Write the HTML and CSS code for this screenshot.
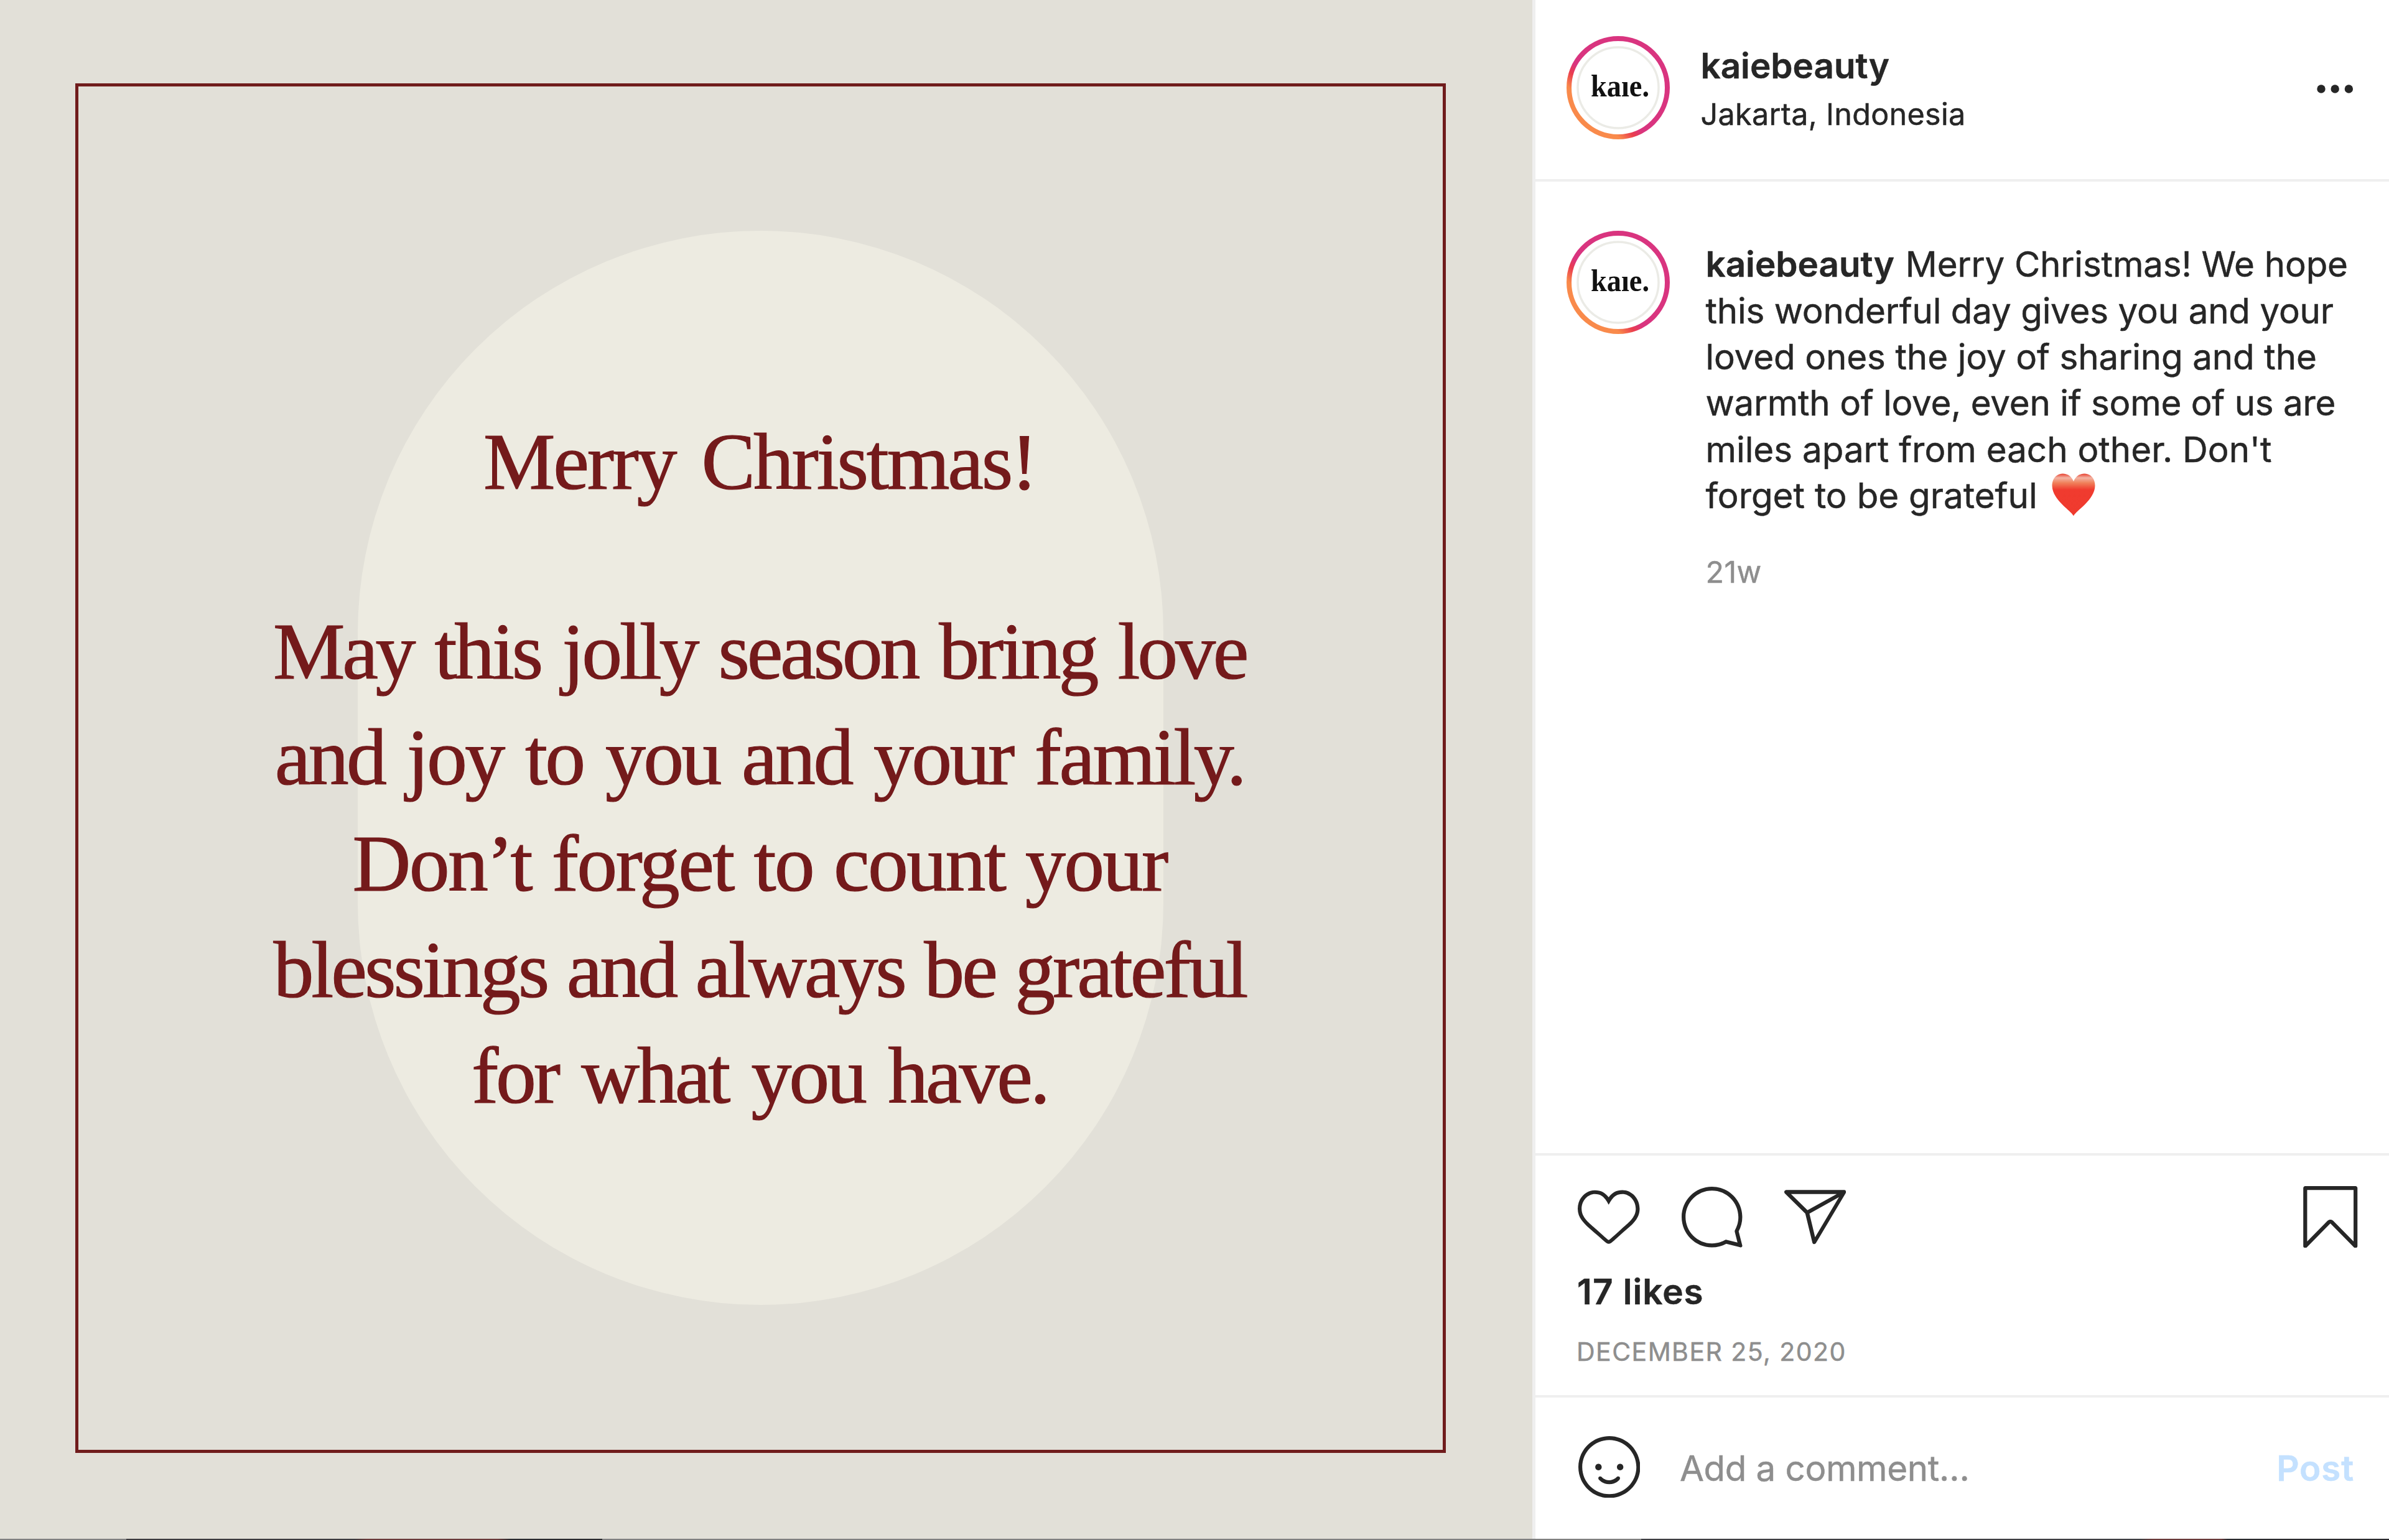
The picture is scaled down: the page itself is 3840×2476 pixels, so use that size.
FILE: index.html
```html
<!DOCTYPE html>
<html lang="en">
<head>
<meta charset="utf-8">
<title>kaiebeauty – Merry Christmas!</title>
<link rel="stylesheet" href="styles.css">
</head>
<body>
<svg class="defs" aria-hidden="true">
  <defs>
    <linearGradient id="ring" x1="0" y1="1" x2="1" y2="0">
      <stop offset=".25" stop-color="#f98a4b"/>
      <stop offset=".335" stop-color="#ea3d4e"/>
      <stop offset=".4" stop-color="#d9347f"/>
    </linearGradient>
    <linearGradient id="shine" x1="0" y1="0" x2="0" y2="1">
      <stop offset="0" stop-color="#e8402f"/>
      <stop offset=".1" stop-color="#f3b3a3"/>
      <stop offset=".22" stop-color="#f0805a"/>
      <stop offset=".38" stop-color="#f03b2f"/>
      <stop offset="1" stop-color="#ef3a2e"/>
    </linearGradient>
    <symbol id="avatar" viewBox="0 0 166 166">
      <circle cx="83" cy="83" r="79" fill="#fff" stroke="url(#ring)" stroke-width="8"/>
      <circle cx="83" cy="83" r="65" fill="#fff" stroke="#ebebe6" stroke-width="3.5"/>
      <text class="logo-text" x="39" y="96.5" textLength="94" lengthAdjust="spacingAndGlyphs">kaıe.</text>
    </symbol>
  </defs>
</svg>

<main class="post">
  <section class="photo">
    <div class="frame">
      <div class="pill"></div>
      <div class="greeting">
        <h1 class="line greeting-title">Merry Christmas!</h1>
        <p class="verse">
          <span class="line v1">May this jolly season bring love</span>
          <span class="line v2">and joy to you and your family.</span>
          <span class="line v3">Don’t forget to count your</span>
          <span class="line v4">blessings and always be grateful</span>
          <span class="line v5">for what you have.</span>
        </p>
      </div>
    </div>
  </section>

  <article class="panel">
    <header class="head">
      <svg class="avatar"><use href="#avatar"/></svg>
      <div class="who">
        <div class="name">kaiebeauty</div>
        <div class="place">Jakarta, Indonesia</div>
      </div>
      <svg class="more" viewBox="0 0 60 14"><circle cx="7" cy="7" r="6.7"/><circle cx="29.2" cy="7" r="6.7"/><circle cx="51.4" cy="7" r="6.7"/></svg>
    </header>

    <div class="body">
      <svg class="avatar"><use href="#avatar"/></svg>
      <div class="caption">
        <p class="text">
          <span class="row"><b>kaiebeauty</b> <span class="c1">Merry Christmas! We hope</span></span>
          <span class="row c2">this wonderful day gives you and your</span>
          <span class="row c3">loved ones the joy of sharing and the</span>
          <span class="row c4">warmth of love, even if some of us are</span>
          <span class="row">miles apart from each other. Don't</span>
          <span class="row">forget to be grateful <svg class="emoji" viewBox="0 0 70 69"><path fill="url(#shine)" d="M35 68.500C31 60 1 43 .5 20C.5 8 8 .5 17.500.5C26 .5 32 5.500 35 13C38 5.500 44 .5 52.500.5C62 .5 69.500 8 69.500 20C69 43 39 60 35 68.500z"/></svg></span>
        </p>
        <div class="age">21w</div>
      </div>
    </div>

    <div class="actions">
      <div class="icons">
        <svg class="icon" viewBox="0 0 48 48"><path d="M34.6 6.100c5.700 0 10.400 5.200 10.400 11.500 0 6.800-5.900 11-11.500 16S25 41.300 24 41.900c-1.100-.7-4.700-4-9.500-8.300-5.700-5-11.500-9.200-11.500-16C3 11.300 7.700 6.100 13.400 6.100c4.200 0 6.500 2 8.100 4.300 1.900 2.600 2.200 3.900 2.500 3.900.3 0 .6-1.300 2.500-3.900 1.600-2.300 3.900-4.300 8.100-4.300m0-3c-4.500 0-7.900 1.800-10.600 5.600-2.700-3.700-6.100-5.500-10.600-5.500C6 3.100 0 9.600 0 17.600c0 7.300 5.400 12 10.600 16.500.6.5 1.300 1.100 1.900 1.700l2.300 2c4.400 3.900 6.600 5.900 7.600 6.500.5.3 1.100.5 1.600.5.6 0 1.100-.2 1.600-.5 1-.6 2.800-2.200 7.800-6.800l2-1.800c.7-.6 1.300-1.200 2-1.700C42.700 29.600 48 25 48 17.600c0-8-6-14.500-13.400-14.500z"/></svg>
        <svg class="icon" viewBox="0 0 48 48"><path fill-rule="evenodd" d="M47.500 46.100l-2.800-11c1.800-3.300 2.800-7.100 2.800-11.100C47.500 11 37 .5 24 .5S.5 11 .5 24 11 47.500 24 47.500c4 0 7.800-1 11.100-2.800l11 2.800c.8.2 1.600-.6 1.400-1.400zm-3-22.100c0 4-1 7-2.600 10-.2.4-.3.9-.2 1.400l2.100 8.400-8.300-2.100c-.5-.1-1-.1-1.400.2-1.800 1-5.200 2.600-10 2.600-11.400 0-20.600-9.200-20.600-20.500S12.700 3.500 24 3.500 44.500 12.700 44.500 24z"/></svg>
        <svg class="icon" viewBox="0 0 48 48"><path d="M47.800 3.800c-.3-.5-.8-.8-1.300-.8h-45C.9 3.100.3 3.500.1 4S0 5.200.4 5.700l15.900 15.600 5.500 22.600c.1.6.6 1 1.200 1.100h.2c.5 0 1-.3 1.300-.7l23.200-39c.4-.4.4-1 .1-1.500zM5.200 6.100h35.500L18 18.700 5.200 6.100zm18.700 33.600l-4.400-18.400L42.400 8.600 23.900 39.700z"/></svg>
        <svg class="icon save" viewBox="0 0 48 48"><path d="M43.500 48c-.4 0-.8-.2-1.100-.4L24 29 5.600 47.600c-.4.4-1.100.6-1.600.3-.6-.2-1-.8-1-1.400v-45C3 .7 3.700 0 4.500 0h39c.8 0 1.500.7 1.500 1.500v45c0 .6-.4 1.200-.9 1.400-.2.1-.4.1-.6.1zM24 26c.8 0 1.600.3 2.200.9l15.800 16V3H6v39.900l15.800-16c.6-.6 1.400-.9 2.200-.9z"/></svg>
      </div>
      <div class="likes">17 likes</div>
      <div class="date">DECEMBER 25, 2020</div>
    </div>

    <div class="composer">
      <svg class="icon" viewBox="0 0 48 48"><path d="M24 48C10.800 48 0 37.200 0 24S10.800 0 24 0s24 10.800 24 24-10.800 24-24 24zm0-45C12.400 3 3 12.400 3 24s9.400 21 21 21 21-9.400 21-21S35.600 3 24 3z"/><path d="M34.900 24c0-1.400-1.100-2.500-2.500-2.500s-2.500 1.100-2.500 2.500 1.100 2.500 2.500 2.500 2.500-1.100 2.500-2.500zm-21.800 0c0-1.400 1.100-2.500 2.500-2.500s2.500 1.100 2.500 2.500-1.100 2.500-2.500 2.500-2.500-1.100-2.500-2.500zM24 37.300c-5.200 0-8-3.500-8.200-3.700-.5-.6-.4-1.600.2-2.100.6-.5 1.600-.4 2.100.2.1.1 2.100 2.500 5.800 2.500 3.700 0 5.800-2.500 5.800-2.500.5-.6 1.500-.7 2.100-.2.6.5.7 1.500.2 2.100 0 .2-2.800 3.700-8 3.700z"/></svg>
      <div class="placeholder">Add a comment…</div>
      <div class="submit">Post</div>
    </div>
  </article>
</main>
<div class="edge"></div>
</body>
</html>
```
FILE: styles.css
```css
* { box-sizing: border-box; }

body {
  margin: 0;
  width: 3840px;
  height: 2476px;
  overflow: hidden;
  background: #fff;
  color: #262626;
  font: 400 56.5px/74.4px Inter, "Liberation Sans", sans-serif;
  -webkit-text-stroke: .5px currentColor;
}

svg { display: block; flex: none; }
h1, p { margin: 0; }
.defs { position: absolute; width: 0; height: 0; }

.post { display: flex; height: 2474px; }

/* Photo side: framed greeting card */
.photo {
  width: 2463px;
  flex: none;
  padding: 134px 0 0 121px;
  background: #e2e0d8;
}

.frame {
  display: grid;
  justify-items: center;
  align-items: start;
  width: 2203px;
  height: 2202px;
  border: 5px solid #701c1c;
}

.pill, .greeting { grid-area: 1 / 1; }

.pill {
  width: 1295px;
  height: 1727px;
  margin-top: 232px;
  margin-right: 1px;
  border-radius: 648px;
  background: #edebe1;
}

.greeting {
  display: flex;
  flex-direction: column;
  gap: 134.7px;
  margin-top: 517.5px;
  margin-right: 3px;
  color: #741a1b;
  font: 400 130px/170.6px "Liberation Serif", serif;
  text-align: center;
  -webkit-text-stroke: 1.2px #741a1b;
}

.line { display: block; white-space: nowrap; }
.greeting-title { font: inherit; letter-spacing: -3.3px; word-spacing: 13px; }
.v1 { letter-spacing: -4.3px; word-spacing: 6px; }
.v2 { letter-spacing: -3.7px; word-spacing: 6.5px; }
.v3 { letter-spacing: -2.7px; word-spacing: 3px; }
.v4 { letter-spacing: -4.1px; word-spacing: 3px; }
.v5 { letter-spacing: -4.2px; word-spacing: 9px; }

/* Detail side */
.panel {
  flex: 1;
  display: flex;
  flex-direction: column;
  border-left: 5px solid #efefef;
}

.avatar { width: 166px; height: 166px; }
.logo-text { font: 700 50px "Liberation Serif", serif; fill: #111; }

.head {
  display: flex;
  height: 292px;
  padding: 58px 56px 0 49.500px;
  border-bottom: 4px solid #efefef;
}

.who { flex: 1; margin: 11.300px 0 0 50px; }
.name { font-weight: 600; }
.place {
  margin-top: 10.700px;
  font-size: 48.5px;
  line-height: 60px;
  letter-spacing: .3px;
}

.more { width: 60px; height: 14px; margin-top: 78px; fill: #262626; }

.body {
  flex: 1;
  display: flex;
  padding: 78.700px 0 0 49.500px;
}

.caption { margin: 17.500px 0 0 58px; }
.row { display: block; white-space: nowrap; }
.row b { font-weight: 600; }
.c1 { margin-left: 2px; letter-spacing: -.14px; }
.c2 { letter-spacing: -.2px; }
.c3 { letter-spacing: -.13px; }
.c4 { letter-spacing: -.25px; }

.emoji {
  display: inline-block;
  width: 70px;
  height: 69px;
  margin-left: 8px;
  vertical-align: -13px;
}

.age {
  margin-top: 55.800px;
  color: #8e8e8e;
  font-size: 48.5px;
  line-height: 60px;
  letter-spacing: .35px;
}

.actions {
  height: 389px;
  padding: 49px 45px 0 68px;
  border-top: 4px solid #efefef;
}

.icons { display: flex; gap: 66.300px; }
.icon { width: 99.5px; height: 99.5px; fill: #262626; }
.save { margin-left: auto; }
.likes { margin: 33.500px 0 0 -1px; font-weight: 600; letter-spacing: 1px; }
.date {
  margin: 29px 0 0 -2px;
  color: #8e8e8e;
  font-size: 41px;
  line-height: 60px;
  letter-spacing: 1.450px;
}

.composer {
  display: flex;
  height: 231.5px;
  padding: 62px 56px 0 68.500px;
  border-top: 4px solid #efefef;
}

.placeholder { flex: 1; margin: 15px 0 0 64px; color: #8e8e8e; letter-spacing: -.36px; }
.submit { margin-top: 15px; color: #c4e1ff; font-weight: 600; letter-spacing: .84px; }

/* Sliver of the page behind the dialog */
.edge {
  height: 2px;
  background: linear-gradient(90deg,
    #808080 0 203px, #3c3a3d 203px 570px, #6a3a3a 590px 800px,
    #2a2a2e 820px 968px, #808080 968px 2638px, #3e3e42 2638px 3440px,
    #6a3a3a 3460px 3570px, #2a2a2e 3580px);
}
```
